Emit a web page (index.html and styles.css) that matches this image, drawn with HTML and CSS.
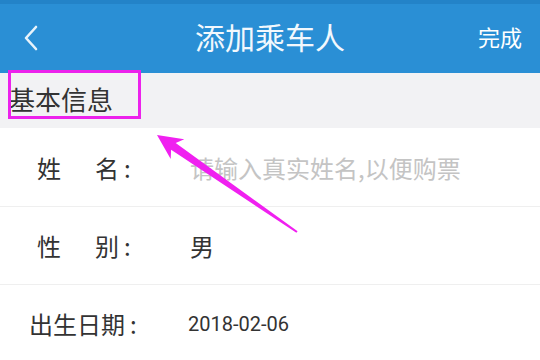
FILE: index.html
```html
<!DOCTYPE html>
<html lang="zh-CN">
<head>
    <meta charset="UTF-8">
    <meta name="viewport" content="width=device-width, initial-scale=1.0">
    <title>添加乘车人</title>
    <link rel="stylesheet" href="styles.css">
</head>
<body>
<div class="page">
    <div class="navbar">
        <div class="nav-left">
            <svg class="back" width="16" height="26" viewBox="0 0 16 26">
                <path d="M13 2 L3 13 L13 24" fill="none" stroke="#e8f3fb" stroke-width="2.6" stroke-linecap="round" stroke-linejoin="round"/>
            </svg>
        </div>
        <div class="nav-title">添加乘车人</div>
        <div class="nav-right">完成</div>
    </div>

    <div class="section">基本信息</div>

    <div class="form">
        <div class="row row-first">
            <div class="label"><span class="label-gap">姓</span>名<span class="colon">:</span></div>
            <div class="value placeholder">请输入真实姓名,以便购票</div>
        </div>
        <div class="row">
            <div class="label"><span class="label-gap">性</span>别<span class="colon">:</span></div>
            <div class="value">男</div>
        </div>
        <div class="row">
            <div class="label label-long">出生日期<span class="colon">:</span></div>
            <div class="value date">2018-02-06</div>
        </div>
    </div>

    <!-- annotation -->
    <svg class="mark" width="540" height="360" viewBox="0 0 540 360">
        <rect x="9.5" y="71.5" width="130" height="46" fill="none" stroke="#ec22ec" stroke-width="3"/>
        <polygon points="157,135 184.3,139.3 175.7,143.1 297.6,231.2 296.4,232.8 171.1,149.7 170.7,159.1" fill="#f020f0"/>
    </svg>
</div>
</body>
</html>
```

FILE: styles.css
```css
body {
    margin: 0;
    font-family: "Noto Sans CJK SC", "Noto Sans", sans-serif;
    background-color: #ffffff;
}

.page {
    position: relative;
    width: 540px;
    height: 360px;
    overflow: hidden;
}

.navbar {
    display: grid;
    grid-template-columns: 1fr auto 1fr;
    align-items: center;
    height: 69px;
    border-top: 4px solid #2383c8;
    background-color: #2a8fd5;
    color: #ffffff;
}

.nav-left {
    padding-left: 23px;
    display: flex;
    align-items: center;
}

.back {
    margin-top: -2px;
}

.nav-title {
    font-size: 30px;
    color: #f2f8fd;
    margin-top: -6px;
}

.nav-right {
    text-align: right;
    padding-right: 18px;
    font-size: 22px;
    margin-top: -6px;
}

.section {
    height: 55px;
    line-height: 52px;
    padding-left: 9px;
    background-color: #f2f2f4;
    font-size: 26px;
    color: #333333;
}

.row {
    display: flex;
    align-items: center;
    height: 77px;
    border-top: 1px solid #efefef;
    background-color: #ffffff;
}

.row-first {
    border-top: none;
    height: 78px;
}

.label {
    width: 190px;
    padding-left: 37px;
    box-sizing: border-box;
    font-size: 24px;
    color: #333333;
}

.label-gap {
    margin-right: 34px;
}

.colon {
    margin-left: 5px;
}

.label-long {
    padding-left: 29px;
}

.value {
    font-size: 24px;
    color: #333333;
}

.placeholder {
    color: #c4c4c4;
}

.date {
    margin-left: -2px;
    font-family: Roboto, "Noto Sans", sans-serif;
    font-size: 20px;
}

.mark {
    position: absolute;
    top: 0;
    left: 0;
    pointer-events: none;
}
```
